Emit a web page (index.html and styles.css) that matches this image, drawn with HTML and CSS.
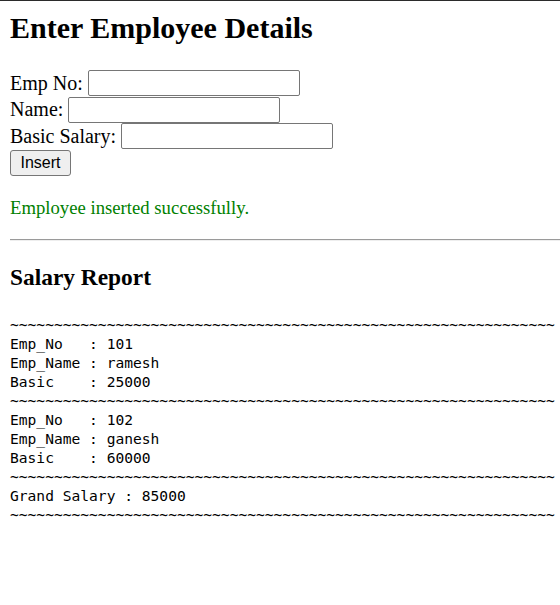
FILE: index.html
```html
<!DOCTYPE html>
<html>
<head>
<meta charset="utf-8">
<title>Employee Details</title>
<link rel="stylesheet" href="styles.css">
</head>
<body>
<h1 class="title">Enter Employee Details</h1>
<form class="form">
  <div class="row"><label>Emp No:</label><input class="field" type="text"></div>
  <div class="row"><label>Name:</label><input class="field" type="text"></div>
  <div class="row"><label>Basic Salary:</label><input class="field" type="text"></div>
  <div class="row"><button class="btn" type="button">Insert</button></div>
</form>
<p class="msg">Employee inserted successfully.</p>
<hr class="rule">
<h2 class="subtitle">Salary Report</h2>
<pre class="report">~~~~~~~~~~~~~~~~~~~~~~~~~~~~~~~~~~~~~~~~~~~~~~~~~~~~~~~~~~~~~~
Emp_No   : 101
Emp_Name : ramesh
Basic    : 25000
~~~~~~~~~~~~~~~~~~~~~~~~~~~~~~~~~~~~~~~~~~~~~~~~~~~~~~~~~~~~~~
Emp_No   : 102
Emp_Name : ganesh
Basic    : 60000
~~~~~~~~~~~~~~~~~~~~~~~~~~~~~~~~~~~~~~~~~~~~~~~~~~~~~~~~~~~~~~
Grand Salary : 85000
~~~~~~~~~~~~~~~~~~~~~~~~~~~~~~~~~~~~~~~~~~~~~~~~~~~~~~~~~~~~~~</pre>
</body>
</html>
```
FILE: styles.css
```css
html {
  border-top: 1px solid #2b2b2b;
}
body {
  margin: 0;
  padding: 0 0 0 10px;
  font-family: "Liberation Serif", "Times New Roman", serif;
  color: #000;
  background: #fff;
  overflow: hidden;
}
.title {
  margin: 10px 0 0 0;
  font-size: 30px;
  line-height: 34px;
  font-weight: bold;
}
.form {
  margin-top: 25px;
  display: flex;
  flex-direction: column;
}
.row {
  display: flex;
  align-items: center;
  height: 26.5px;
  font-size: 20px;
}
.row label {
  margin-right: 5px;
}
.field {
  box-sizing: border-box;
  width: 212px;
  height: 26px;
  border: 1px solid #767676;
  border-radius: 2px;
  padding: 1px 2px;
  font-size: 16px;
  background: #fff;
}
.btn {
  box-sizing: border-box;
  width: 61px;
  height: 26px;
  padding: 0 9px;
  border: 1px solid #767676;
  border-radius: 3px;
  background: #efefef;
  font-family: "Liberation Sans", Arial, sans-serif;
  font-size: 16px;
  color: #000;
}
.msg {
  margin: 21px 0 0 0;
  font-size: 18.7px;
  line-height: 22px;
  color: #008000;
}
.rule {
  margin: 20px 0 0 0;
  border: none;
  border-top: 1px solid #9a9a9a;
  border-bottom: 1px solid #eeeeee;
  height: 0;
}
.subtitle {
  margin: 22px 0 0 0;
  font-size: 23.4px;
  line-height: 28px;
  font-weight: bold;
}
.report {
  margin: 24px 0 0 0;
  font-family: "DejaVu Sans Mono", "Liberation Mono", monospace;
  font-size: 14.6px;
  line-height: 19px;
  white-space: pre;
}
```
